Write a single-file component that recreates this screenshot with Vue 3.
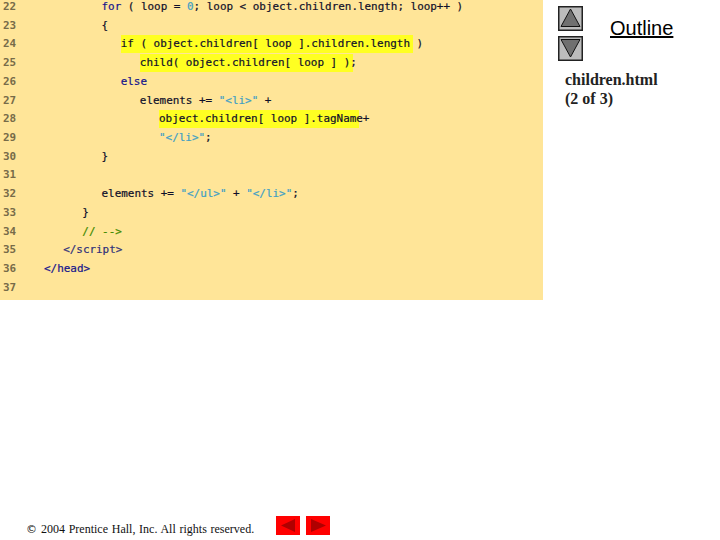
<script setup>
const lines = [
  { n: 22, indent: 9, parts: [['for', 'kw'], [' ( loop = '], ['0', 'num'], ['; loop < object.children.length; loop++ )']] },
  { n: 23, indent: 9, parts: [['{']] },
  { n: 24, indent: 12, parts: [['if ( object.children[ loop ].children.length', 'hl'], [' )']] },
  { n: 25, indent: 15, parts: [['child( object.children[ loop ] )', 'hl'], [';']] },
  { n: 26, indent: 12, parts: [['else', 'kw']] },
  { n: 27, indent: 15, parts: [['elements += '], ['"<li>"', 'str'], [' +']] },
  { n: 28, indent: 18, parts: [['object.children[ loop ].tagNam', 'hl'], ['e+']] },
  { n: 29, indent: 18, parts: [['"</li>"', 'str'], [';']] },
  { n: 30, indent: 9, parts: [['}']] },
  { n: 31, indent: 0, parts: [] },
  { n: 32, indent: 9, parts: [['elements += '], ['"</ul>"', 'str'], [' + '], ['"</li>"', 'str'], [';']] },
  { n: 33, indent: 6, parts: [['}']] },
  { n: 34, indent: 6, parts: [['// -->', 'com']] },
  { n: 35, indent: 3, parts: [['<\/script>', 'tag2']] },
  { n: 36, indent: 0, parts: [['</head>', 'kw']] },
  { n: 37, indent: 0, parts: [] }
]
</script>

<template>
  <div class="page">
    <div class="top">
      <div class="code">
        <div v-for="l in lines" :key="l.n" class="line">
          <span class="num-col">{{ l.n }}</span>
          <span class="text" :style="{ paddingLeft: l.indent * 6.39 + 'px' }"><span v-for="(p, i) in l.parts" :key="i" :class="p[1]">{{ p[0] }}</span></span>
        </div>
      </div>
      <aside class="side">
        <div class="head">
          <div class="arrows">
            <div class="arrow-btn">
              <svg width="25" height="25" viewBox="0 0 25 25"><path d="M12.500 3L22 20.500H3Z" fill="#707070" stroke="#111" stroke-width="1"/></svg>
            </div>
            <div class="arrow-btn">
              <svg width="25" height="25" viewBox="0 0 25 25"><path d="M12.500 21L22 3.500H3Z" fill="#707070" stroke="#111" stroke-width="1"/></svg>
            </div>
          </div>
          <div class="outline">Outline</div>
        </div>
        <div class="file">children.html<br />(2 of 3)</div>
      </aside>
    </div>
    <footer class="foot">
      <span class="copy"><span class="c">©</span>2004 Prentice Hall, Inc. All rights reserved.</span>
      <div class="nav">
        <div class="nav-btn">
          <svg width="24" height="19" viewBox="0 0 24 19"><path d="M5 9.500L19 3V16Z" fill="#b00000"/></svg>
        </div>
        <div class="nav-btn">
          <svg width="24" height="19" viewBox="0 0 24 19"><path d="M5 3V16L20 9.500Z" fill="#b00000"/></svg>
        </div>
      </div>
    </footer>
  </div>
</template>

<style>
html, body { margin: 0; background: #fff; }
</style>

<style scoped>
.page {
  width: 720px;
  height: 540px;
  overflow: hidden;
  display: flex;
  flex-direction: column;
  background: #fff;
}
.top { display: flex; }
.code {
  width: 543px;
  height: 300px;
  background: #ffe598;
  font-family: "DejaVu Sans Mono", monospace;
  font-size: 10.93px;
  color: #10102a;
  -webkit-text-stroke: 0.2px;
}
.line {
  display: flex;
  height: 18.73px;
  line-height: 13px;
  white-space: pre;
}
.num-col {
  width: 44px;
  padding-left: 3px;
  box-sizing: border-box;
  color: #776b48;
  font-weight: bold;
  -webkit-text-stroke: 0;
}
.text { display: block; }
.hl { background: #ffff22; padding: 2px 0 3px; box-shadow: 3px 0 0 #ffff22; }
.kw { color: #14148c; }
.num { color: #3f9fc4; }
.str { color: #3f9fc4; }
.com { color: #3f8a00; }
.tag2 { color: #30307a; }
.side { flex: 1; min-width: 0; padding: 6px 0 0 15px; }
.head { display: flex; }
.arrows { display: flex; flex-direction: column; gap: 5px; }
.arrow-btn {
  width: 25px;
  height: 25px;
  background: #bcbcbc;
  box-shadow: inset 0 0 0 1.5px #222;
  display: flex;
}
.outline {
  margin: 11px 0 0 27px;
  font-family: "Liberation Sans", sans-serif;
  font-size: 20px;
  line-height: 22px;
  color: #000;
  text-decoration: underline;
}
.file {
  margin: 9px 0 0 7px;
  font-family: "Liberation Serif", serif;
  font-size: 16px;
  font-weight: bold;
  line-height: 19px;
  color: #222;
}
.foot {
  margin-top: auto;
  display: flex;
  align-items: center;
  padding: 0 0 5px 26px;
  height: 19px;
}
.copy {
  width: 250px;
  font-family: "Liberation Serif", serif;
  font-size: 12px;
  word-spacing: 0.7px;
  color: #111;
  padding-top: 7px;
}
.c { display: inline-block; width: 15px; font-family: "DejaVu Sans", sans-serif; font-size: 11px; }
.nav { display: flex; gap: 6px; }
.nav-btn { width: 24px; height: 19px; background: #f00; display: flex; }
svg { display: block; }
</style>
